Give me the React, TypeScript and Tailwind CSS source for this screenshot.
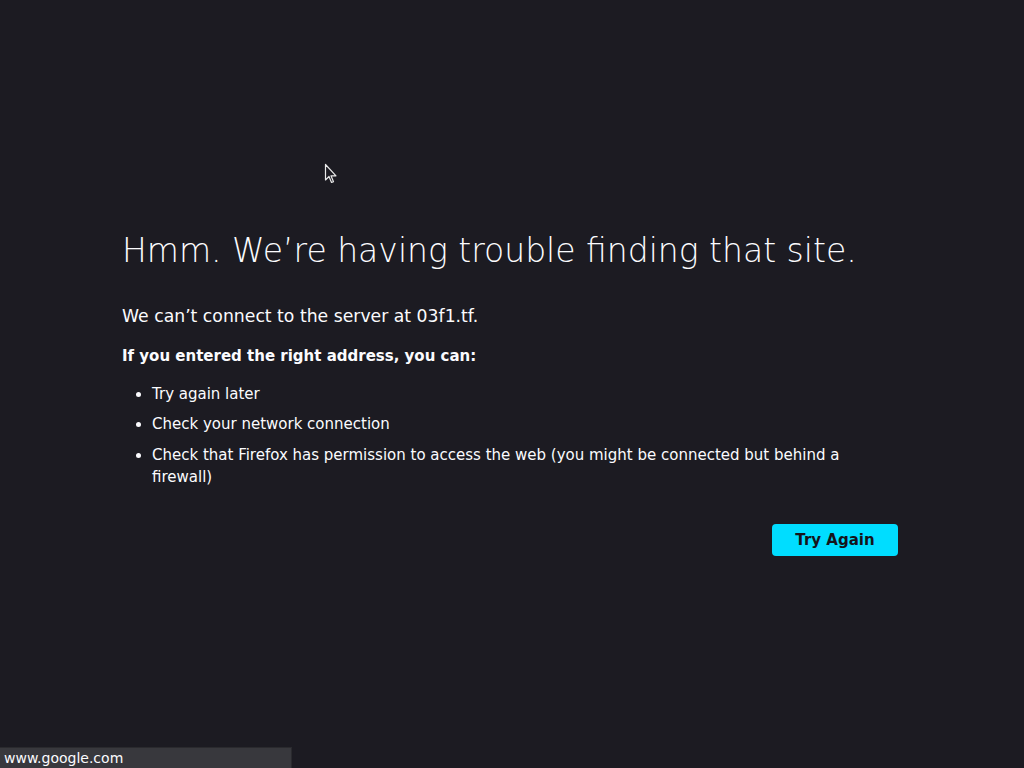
import React from "react";

export default function App() {
  return (
    <div
      className="relative w-[1024px] h-[768px] overflow-hidden bg-[#1c1b22] text-[#fbfbfe]"
      style={{ fontFamily: '"DejaVu Sans", sans-serif' }}
    >
      <div className="ml-[122px] w-[776px] pt-[228px]">
        <h1 className="text-[33px] leading-[46px] font-extralight text-[#fbfbfe]">
          Hmm. We’re having trouble finding that site.
        </h1>
        <p className="mt-[30px] text-[17.25px] leading-[24px]">
          We can’t connect to the server at 03f1.tf.
        </p>
        <p className="mt-[17px] text-[15px] leading-[22px] font-bold">
          If you entered the right address, you can:
        </p>
        <ul className="mt-[16px] pl-[30px] list-disc text-[15px] leading-[22px] pr-[50px]">
          <li className="mb-[8px]">Try again later</li>
          <li className="mb-[9px]">Check your network connection</li>
          <li>
            Check that Firefox has permission to access the web (you might be
            connected but behind a firewall)
          </li>
        </ul>
        <div className="mt-[36px] flex justify-end">
          <button className="h-[32px] w-[126px] rounded-[4px] bg-[#00ddff] text-[15px] font-bold text-[#15141a]">
            Try Again
          </button>
        </div>
      </div>

      <svg
        className="absolute left-[324px] top-[163px]"
        width="14"
        height="22"
        viewBox="0 0 14 22"
      >
        <path
          d="M1.5 1.5 L1.5 17 L5 13.5 L7.5 19.5 L9.5 18.7 L7 12.8 L12 12.8 Z"
          fill="#1c1b22"
          stroke="#e8e8e8"
          strokeWidth="1.2"
          strokeLinejoin="round"
        />
      </svg>

      <div className="absolute left-0 bottom-0 w-[292px] h-[21px] bg-[#38383d] border-t border-r border-[#2a2a2e] flex items-center pl-[4px] text-[14px] text-[#fbfbfe]">
        www.google.com
      </div>
    </div>
  );
}
